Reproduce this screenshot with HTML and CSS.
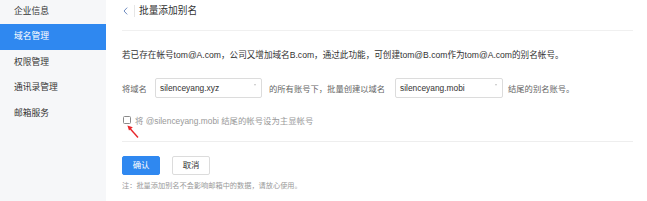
FILE: index.html
```html
<!DOCTYPE html>
<html lang="zh">
<head>
<meta charset="utf-8">
<link rel="stylesheet" href="styles.css">
</head>
<body>
<div class="page">
  <aside class="sidebar">
    <ul class="menu">
      <li class="item">企业信息</li>
      <li class="item active">域名管理</li>
      <li class="item">权限管理</li>
      <li class="item">通讯录管理</li>
      <li class="item">邮箱服务</li>
    </ul>
  </aside>
  <main class="main">
    <div class="header">
      <svg class="back" width="5" height="8" viewBox="0 0 5 8"><path d="M4.2 0.6 L1 4 L4.2 7.4" fill="none" stroke="#6f8cc0" stroke-width="1"/></svg>
      <span class="sep"></span>
      <span class="title">批量添加别名</span>
    </div>
    <p class="info">若已存在帐号tom@A.com，公司又增加域名B.com，通过此功能，可创建tom@B.com作为tom@A.com的别名帐号。</p>
    <div class="row">
      <span class="label">将域名</span>
      <div class="select sel1"><span>silenceyang.xyz</span><i class="caret"></i></div>
      <span class="text t1">的所有账号下，批量创建以域名</span>
      <div class="select sel2"><span>silenceyang.mobi</span><i class="caret"></i></div>
      <span class="text t2">结尾的别名账号。</span>
    </div>
    <div class="check-row">
      <span class="checkbox"></span>
      <span class="check-label">将 @silenceyang.mobi 结尾的帐号设为主显帐号</span>
      <svg class="arrow" width="16" height="16" viewBox="0 0 16 16"><path d="M14 14.5 L6 5.5" stroke="#e8262b" stroke-width="1.4" fill="none"/><path d="M3.4 2.4 L8.8 4.2 L5.0 7.6 Z" fill="#e8262b"/></svg>
    </div>
    <div class="divider"></div>
    <div class="buttons">
      <button class="btn primary">确认</button>
      <button class="btn cancel">取消</button>
    </div>
    <p class="note">注：批量添加别名不会影响邮箱中的数据，请放心使用。</p>
  </main>
</div>
</body>
</html>
```
FILE: styles.css
```css
* { box-sizing: border-box; }
html, body { margin: 0; padding: 0; }
body {
  width: 647px;
  height: 201px;
  overflow: hidden;
  background: #fff;
  font-family: "Liberation Sans", "Noto Sans CJK SC", sans-serif;
  color: #333;
}
.page { display: flex; height: 201px; }
.sidebar {
  width: 106px;
  flex: none;
  background: #f6f7f9;
}
.menu { list-style: none; margin: -1.5px 0 0; padding: 0; }
.item {
  height: 25.5px;
  line-height: 25.5px;
  padding-left: 14px;
  font-size: 8.75px;
  color: #333;
}
.item.active { background: #2f88f0; color: #fff; }
.main {
  flex: 1;
  padding: 0 14px 0 16px;
  position: relative;
}
.header {
  display: flex;
  align-items: center;
  height: 31px;
  padding-bottom: 9px;
  border-bottom: 1px solid #f0f0f0;
}
.back { margin-left: 1px; }
.sep { width: 1px; height: 12px; background: #e6e6e6; margin-left: 6px; }
.title { margin-left: 4px; font-size: 9.7px; color: #333; line-height: 12px; }
.info {
  margin: 18px 0 0;
  font-size: 8.6px;
  line-height: 12px;
  color: #333;
  white-space: nowrap;
}
.row {
  display: flex;
  align-items: center;
  height: 20px;
  margin-top: 17px;
  font-size: 8.3px;
  white-space: nowrap;
}
.label { color: #666; width: 33px; }
.select {
  position: relative;
  height: 20px;
  border: 1px solid #dcdcdc;
  border-radius: 2px;
  display: flex;
  align-items: center;
  padding-left: 4px;
  font-size: 8.4px;
  color: #333;
}
.sel1 { width: 107px; }
.sel2 { width: 108px; }
.caret {
  position: absolute;
  right: 5px;
  top: 5px;
  width: 0;
  height: 0;
  border-left: 1.5px solid transparent;
  border-right: 1.5px solid transparent;
  border-top: 2.5px solid #c4c4c4;
}
.text { color: #666; }
.t1 { margin-left: 7px; width: 126px; }
.t2 { margin-left: 5px; }
.check-row {
  position: relative;
  display: flex;
  align-items: center;
  height: 12px;
  margin-top: 16px;
}
.checkbox {
  width: 8px;
  height: 8px;
  margin-left: 0.5px;
  border: 1px solid #8a8a8a;
  border-radius: 1.5px;
  background: #fff;
}
.check-label {
  margin-left: 4.5px;
  font-size: 8.4px;
  color: #999;
  white-space: nowrap;
}
.arrow { position: absolute; left: 2px; top: 9px; }
.divider { margin-top: 15px; border-top: 1px solid #eee; }
.buttons { display: flex; margin-top: 14px; }
.btn {
  width: 38px;
  height: 19px;
  padding: 0;
  border-radius: 2px;
  font-family: inherit;
  font-size: 8.4px;
  line-height: 17px;
}
.primary { background: #2f88f0; color: #fff; border: 1px solid #2f88f0; }
.cancel { margin-left: 12px; background: #fff; color: #333; border: 1px solid #dcdcdc; }
.note {
  margin: 6px 0 0;
  font-size: 7.2px;
  line-height: 10px;
  color: #999;
  white-space: nowrap;
}
```
